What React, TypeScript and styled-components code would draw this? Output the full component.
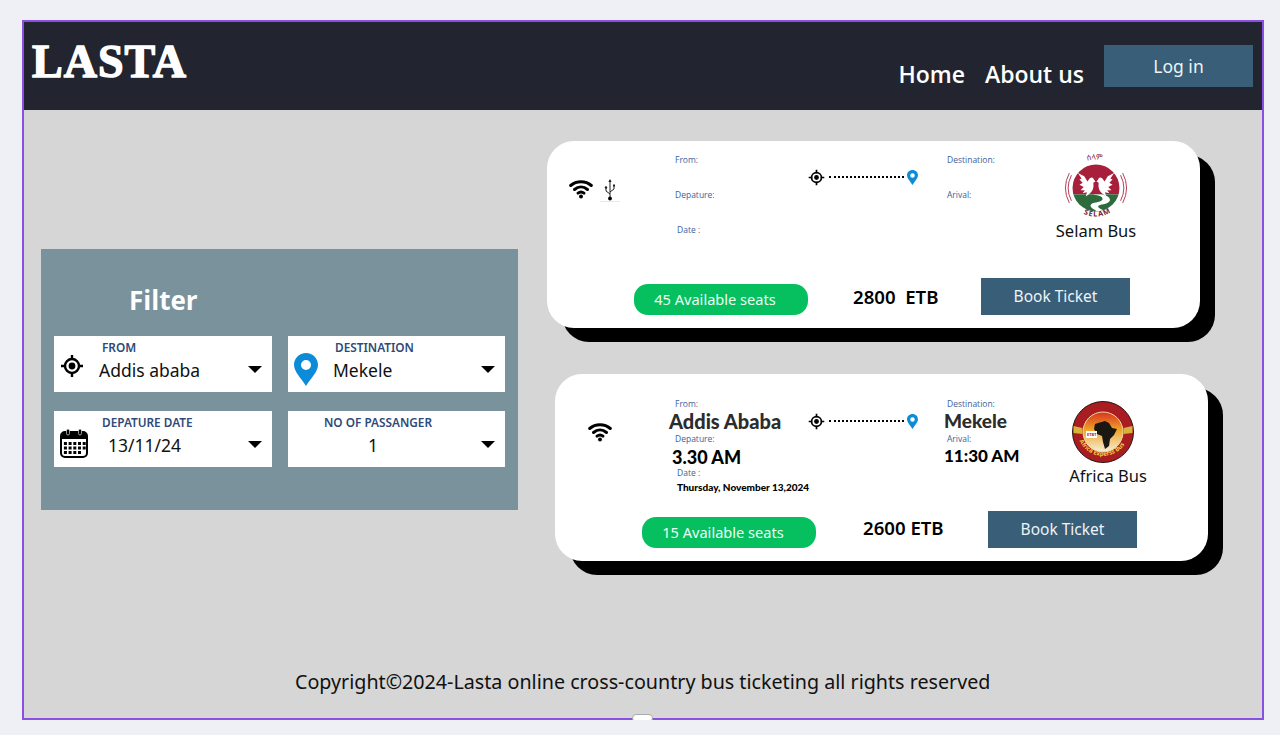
import React from "react";
import styled, { createGlobalStyle } from "styled-components";

const Global = createGlobalStyle`
  html, body { margin: 0; padding: 0; background: #eff0f5; overflow: hidden; }
  * { box-sizing: border-box; }
  body { font-family: "Noto Sans", "Open Sans", sans-serif; }
`;

const Frame = styled.div`
  position: relative;
  width: 1242px;
  height: 700px;
  margin: 20px 0 0 22px;
  border: 2px solid #8a4fe3;
  display: flex;
  flex-direction: column;
  background: #d6d6d6;
`;
const Handle = styled.div`
  position: absolute;
  left: 608px;
  bottom: -4px;
  width: 21px;
  height: 8px;
  border-radius: 4px;
  background: #fff;
  border: 1px solid #aaa;
`;
const Header = styled.header`
  height: 88px;
  background: #22252f;
  display: flex;
  align-items: flex-start;
  padding: 0 9px 0 8px;
  flex: none;
`;
const Logo = styled.div`
  font-family: "Liberation Serif", serif;
  font-weight: 700;
  font-size: 46px;
  line-height: 46px;
  letter-spacing: 1px;
  color: #fff;
  -webkit-text-stroke: 1.4px #fff;
  margin-top: 17px;
`;
const Nav = styled.nav`
  margin-left: auto;
  display: flex;
  align-items: flex-start;
  gap: 20px;
`;
const NavLink = styled.a`
  font-family: "Open Sans", sans-serif;
  font-weight: 600;
  font-size: 23px;
  line-height: 32px;
  color: #fff;
  margin-top: 36px;
`;
const LoginButton = styled.button`
  width: 149px;
  height: 42px;
  margin-top: 23px;
  border: none;
  background: #385e78;
  color: #eef3f6;
  font-family: "Noto Sans", sans-serif;
  font-size: 17.5px;
`;
const Content = styled.main`
  flex: 1;
  display: flex;
  align-items: flex-start;
  padding-left: 17px;
`;
const FilterPanel = styled.section`
  width: 477px;
  height: 261px;
  margin-top: 139px;
  background: #7a929c;
  padding: 33px 13px 0;
`;
const FilterTitle = styled.h2`
  margin: 0 0 18px 75px;
  font-family: "Open Sans", sans-serif;
  font-weight: 700;
  font-size: 26px;
  line-height: 36px;
  color: #fff;
`;
const FilterGrid = styled.div`
  display: grid;
  grid-template-columns: 218px 217px;
  grid-auto-rows: 56px;
  column-gap: 16px;
  row-gap: 19px;
`;
const Field = styled.div`
  background: #fff;
  display: grid;
  grid-template-columns: 44px 1fr 24px;
  align-items: center;
`;
const FieldIcon = styled.div<{ $top: number }>`
  display: flex;
  justify-content: flex-start;
  padding: ${(p) => p.$top}px 0 0 6px;
`;
const FieldText = styled.div`
  display: flex;
  flex-direction: column;
  padding-bottom: 7px;
`;
const FieldLabel = styled.span<{ $indent: number }>`
  margin-left: ${(p) => p.$indent}px;
  font-size: 11.8px;
  line-height: 14px;
  font-weight: 600;
  color: #2f4a78;
  white-space: nowrap;
`;
const FieldValue = styled.span<{ $indent: number }>`
  margin-left: ${(p) => p.$indent}px;
  margin-top: 5px;
  font-size: 17.5px;
  line-height: 22px;
  color: #111;
`;
const Caret = styled.span`
  width: 0;
  height: 0;
  margin: 11px 0 0 0;
  border-left: 7px solid transparent;
  border-right: 7px solid transparent;
  border-top: 7px solid #000;
`;
const Cards = styled.div`
  margin: 31px 0 0 29px;
  display: flex;
  flex-direction: column;
  gap: 46px;
`;
const Card = styled.article<{ $shift: number }>`
  width: 653px;
  height: 187px;
  margin-left: ${(p) => p.$shift}px;
  border-radius: 27px;
  background: #fff;
  box-shadow: 15px 14px 0 #000;
  display: flex;
  flex-direction: column;
`;
const TopRow = styled.div<{ $first: number }>`
  height: 137px;
  flex: none;
  display: grid;
  grid-template-columns: ${(p) => p.$first}px 133px 139px 1fr;
`;
const Amenities = styled.div<{ $left: number; $top: number }>`
  display: flex;
  gap: 7px;
  padding: ${(p) => p.$top}px 0 0 ${(p) => p.$left}px;
  align-items: flex-start;
`;
const InfoColumn = styled.div<{ $top: number }>`
  display: flex;
  flex-direction: column;
  padding-top: ${(p) => p.$top}px;
`;
const InfoLabel = styled.span<{ $gap: number; $indent?: number }>`
  font-family: "Open Sans", sans-serif;
  font-size: 8.5px;
  line-height: 10px;
  color: #3d5f9a;
  margin-bottom: ${(p) => p.$gap}px;
  margin-left: ${(p) => p.$indent ?? 0}px;
`;
const CityName = styled.strong<{ $indent?: number; $size: number }>`
  font-family: "Lato", sans-serif;
  font-weight: 900;
  font-size: ${(p) => p.$size}px;
  line-height: 22px;
  color: #2c2c2c;
  margin: -2px 0 2px ${(p) => p.$indent ?? 0}px;
  white-space: nowrap;
`;
const TimeText = styled.strong<{ $size: number; $indent: number }>`
  font-family: "Lato", sans-serif;
  font-weight: 900;
  font-size: ${(p) => p.$size}px;
  line-height: 22px;
  color: #000;
  margin-left: ${(p) => p.$indent}px;
  white-space: nowrap;
`;
const DateText = styled.strong`
  font-family: "Lato", sans-serif;
  font-weight: 900;
  font-size: 10px;
  line-height: 14px;
  color: #000;
  margin-left: 2px;
  white-space: nowrap;
`;
const Route = styled.div<{ $top: number }>`
  display: flex;
  align-items: center;
  height: 16px;
  margin-top: ${(p) => p.$top}px;
  gap: 3px;
`;
const RouteLine = styled.span`
  width: 75px;
  margin-left: 1px;
  border-top: 2px dotted #000;
`;
const DestSplit = styled.div`
  display: grid;
  grid-template-columns: 90px 1fr;
`;
const Brand = styled.div<{ $top: number; $left: number }>`
  display: flex;
  flex-direction: column;
  align-items: center;
  width: 110px;
  padding-top: ${(p) => p.$top}px;
  margin-left: ${(p) => p.$left}px;
  svg { overflow: visible; }
`;
const BrandName = styled.span<{ $nudge: number; $top: number }>`
  font-size: 16.5px;
  line-height: 20px;
  margin: ${(p) => p.$top}px 0 0 ${(p) => p.$nudge}px;
  color: #111;
  white-space: nowrap;
`;
const BottomRow = styled.div`
  display: flex;
  align-items: flex-start;
`;
const SeatsPill = styled.span<{ $left: number }>`
  margin: 6px 0 0 ${(p) => p.$left}px;
  width: 174px;
  height: 31px;
  border-radius: 14px;
  background: #06c05f;
  color: #eafff2;
  display: flex;
  align-items: center;
  justify-content: center;
  padding: 0 12px 2px 0;
  font-size: 14.6px;
`;
const Price = styled.strong<{ $left: number; $width: number; $top: number }>`
  margin: ${(p) => p.$top}px 0 0 ${(p) => p.$left}px;
  width: ${(p) => p.$width}px;
  font-family: "Noto Sans", sans-serif;
  font-weight: 600;
  font-size: 18.6px;
  line-height: 26px;
  color: #000;
  white-space: pre;
`;
const BookButton = styled.button`
  width: 149px;
  height: 37px;
  border: none;
  padding-bottom: 2px;
  background: #385e78;
  color: #eef3f6;
  font-family: "Noto Sans", sans-serif;
  font-size: 15.5px;
`;
const Footer = styled.footer`
  flex: none;
  height: 58px;
  padding: 8px 0 0 271px;
  font-size: 19.7px;
  line-height: 28px;
  color: #111;
  white-space: nowrap;
`;

const TargetIcon = ({ size = 24 }: { size?: number }) => (
  <svg width={size} height={size} viewBox="0 0 24 24" fill="none" stroke="#000">
    <circle cx="12" cy="12" r="7" strokeWidth="2.4" />
    <circle cx="12" cy="12" r="3.4" fill="#000" stroke="none" />
    <path d="M12 1v5M12 18v5M1 12h5M18 12h5" strokeWidth="2.4" />
  </svg>
);
const PinIcon = ({ w = 24, h = 33 }: { w?: number; h?: number }) => (
  <svg width={w} height={h} viewBox="0 0 24 33">
    <path
      fillRule="evenodd"
      fill="#0b8bd8"
      d="M12 0C5.2 0 0 5.2 0 11.8 0 19 7.6 25.6 12 33c4.4-7.4 12-14 12-21.2C24 5.2 18.8 0 12 0Zm0 7a5 5 0 1 1 0 10 5 5 0 0 1 0-10Z"
    />
  </svg>
);
const CalendarIcon = () => (
  <svg width="28" height="30" viewBox="0 0 28 30">
    <rect x="1" y="4" width="26" height="25" rx="4" fill="#fff" stroke="#000" strokeWidth="2" />
    <path d="M1 9a5 5 0 0 1 5-5h16a5 5 0 0 1 5 5v2H1Z" fill="#000" />
    <rect x="6.5" y="1" width="3" height="6" rx="1.5" fill="#000" stroke="#fff" strokeWidth=".6" />
    <rect x="18.5" y="1" width="3" height="6" rx="1.5" fill="#000" stroke="#fff" strokeWidth=".6" />
    {[14, 18.5, 23].map((y) =>
      [4.5, 9.2, 13.9, 18.6, 23.3].map((x) =>
        y === 23 && x > 20 ? null : <rect key={`${x}-${y}`} x={x - 0.6} y={y} width="3" height="3" fill="#000" />
      )
    )}
  </svg>
);
const WifiIcon = () => (
  <svg width="24" height="20" viewBox="0 0 24 20" fill="none" stroke="#000" strokeLinecap="round" strokeWidth="3">
    <path d="M1.7 6.5C7.5 1.4 16.5 1.4 22.3 6.5" />
    <path d="M5.5 10.5c4-3.4 9-3.4 13 0" />
    <path d="M9 14.1c1.8-1.4 4.2-1.4 6 0" />
    <circle cx="12" cy="17.6" r="2" fill="#000" stroke="none" />
  </svg>
);
const UsbIcon = () => (
  <svg width="20" height="24" viewBox="0 0 20 24" fill="none">
    <path d="M10 1v19M10 15l-4-3V9M10 13l4-3V7" stroke="#222" strokeWidth="1" />
    <path d="M10 0l1.6 3H8.4Z" fill="#222" />
    <circle cx="6" cy="8.5" r="1.2" fill="#222" />
    <rect x="13" y="5.5" width="2" height="2" fill="#222" />
    <circle cx="10" cy="19.5" r="1.9" fill="#000" />
    <path d="M0 22.5h20" stroke="#e3e3e3" strokeWidth=".8" />
  </svg>
);
const Dove = ({ flip }: { flip?: boolean }) => (
  <path
    transform={flip ? "translate(56 0) scale(-1 1)" : undefined}
    fill="#fff"
    d="M11 16l6 3 3 5 2-3q3-2 4 1l1.500 2-2 1q1 6-3 10l-4 3 1-4-4 1 2-3-4 0 3-3-4-2 3-2-3-3 2-1Z"
  />
);
const SelamLogo = () => (
  <svg width="60" height="64" viewBox="0 0 56 60">
    <defs>
      <clipPath id="selamDisc">
        <circle cx="28" cy="30" r="22" />
      </clipPath>
      <path id="selamTop" d="M14 7A28 28 0 0 1 42 7" />
      <path id="selamBottom" d="M11 50C19 59 37 59 45 50" />
    </defs>
    <g clipPath="url(#selamDisc)">
      <rect x="0" y="6" width="56" height="30" fill="#a81f3b" />
      <rect x="0" y="36" width="56" height="18" fill="#2e6b3c" />
      <path d="M25 36c6 1 10 2 9 5-2 3-10 2-11 5-1 2 3 4 6 6h8c-3-2-7-3-7-5 1-2 9-1 11-5 1-4-5-6-9-6Z" fill="#fff" />
    </g>
    <Dove />
    <Dove flip />
    <g fill="none" stroke="#a81f3b" strokeWidth=".8">
      <path d="M5 18a26 26 0 0 0 0 24M3 16a30 30 0 0 0 0 28" />
      <path d="M51 18a26 26 0 0 1 0 24M53 16a30 30 0 0 1 0 28" />
    </g>
    <text fontFamily="Noto Sans Ethiopic, Noto Sans, DejaVu Sans, sans-serif" fontSize="7" fill="#7a2238">
      <textPath href="#selamTop" startOffset="22%">ሰላም</textPath>
    </text>
    <text fontFamily="Noto Sans, sans-serif" fontSize="6.800" fontWeight="700" fill="#7a2238" letterSpacing="1">
      <textPath href="#selamBottom" startOffset="18%">SELAM</textPath>
    </text>
  </svg>
);
const AfricaLogo = () => (
  <svg width="62" height="62" viewBox="0 0 62 62">
    <defs>
      <path id="africaBottom" d="M6 36a26 26 0 0 0 50 0" />
      <linearGradient id="africaSky" x1="0" y1="0" x2="0" y2="1">
        <stop offset="0" stopColor="#d8321f" />
        <stop offset=".45" stopColor="#f0a428" />
        <stop offset="1" stopColor="#f5efd8" />
      </linearGradient>
    </defs>
    <circle cx="31" cy="31" r="30.5" fill="#a81c22" stroke="#2a1512" strokeWidth="1" />
    <circle cx="31" cy="31" r="20" fill="url(#africaSky)" stroke="#f0d9a0" strokeWidth="1" />
    <path d="M1.500 25l9 2v6l-9-1ZM60.500 25l-9 2v6l9-1Z" fill="#d9b23a" />
    <path
      fill="#1b1712"
      d="M26 22l7-2 4 2 3 5 5 1-3 6-4 4-1 7-4 3-2-7-1-6-5-2-3-5 1-5Z"
    />
    <rect x="14" y="30" width="11" height="7" fill="#fff" />
    <text x="15" y="35" fontFamily="Noto Sans, sans-serif" fontSize="4" fontWeight="700" fill="#a81c22">ETBT</text>
    <text fontFamily="Noto Sans, sans-serif" fontSize="6" fontWeight="700" fill="#f2d23c">
      <textPath href="#africaBottom" startOffset="6%">Africa Experss Bus</textPath>
    </text>
  </svg>
);

function BrandCol(props: {
  dest: React.ReactNode;
  logo: React.ReactNode;
  name: string;
  top: number;
  left: number;
  nudge: number;
  nameTop: number;
  colTop: number;
}) {
  return (
    <DestSplit>
      <InfoColumn $top={props.colTop}>{props.dest}</InfoColumn>
      <Brand $top={props.top} $left={props.left}>
        {props.logo}
        <BrandName $nudge={props.nudge} $top={props.nameTop}>{props.name}</BrandName>
      </Brand>
    </DestSplit>
  );
}

export default function App() {
  return (
    <>
      <Global />
      <Frame>
        <Header>
          <Logo>LASTA</Logo>
          <Nav>
            <NavLink>Home</NavLink>
            <NavLink>About us</NavLink>
            <LoginButton>Log in</LoginButton>
          </Nav>
        </Header>
        <Content>
          <FilterPanel>
            <FilterTitle>Filter</FilterTitle>
            <FilterGrid>
              <Field>
                <FieldIcon $top={3}><TargetIcon /></FieldIcon>
                <FieldText>
                  <FieldLabel $indent={4}>FROM</FieldLabel>
                  <FieldValue $indent={1}>Addis ababa</FieldValue>
                </FieldText>
                <Caret />
              </Field>
              <Field>
                <FieldIcon $top={11}><PinIcon /></FieldIcon>
                <FieldText>
                  <FieldLabel $indent={3}>DESTINATION</FieldLabel>
                  <FieldValue $indent={1}>Mekele</FieldValue>
                </FieldText>
                <Caret />
              </Field>
              <Field>
                <FieldIcon $top={7}><CalendarIcon /></FieldIcon>
                <FieldText>
                  <FieldLabel $indent={4}>DEPATURE DATE</FieldLabel>
                  <FieldValue $indent={10}>13/11/24</FieldValue>
                </FieldText>
                <Caret />
              </Field>
              <Field>
                <FieldIcon $top={3} />
                <FieldText>
                  <FieldLabel $indent={-8}>NO OF PASSANGER</FieldLabel>
                  <FieldValue $indent={36}>1</FieldValue>
                </FieldText>
                <Caret />
              </Field>
            </FilterGrid>
          </FilterPanel>
          <Cards>
            <Card $shift={0}>
              <TopRow $first={128}>
                <Amenities $left={22} $top={38}>
                  <WifiIcon />
                  <UsbIcon />
                </Amenities>
                <InfoColumn $top={14}>
                  <InfoLabel $gap={25}>From:</InfoLabel>
                  <InfoLabel $gap={25}>Depature:</InfoLabel>
                  <InfoLabel $gap={0} $indent={2}>Date :</InfoLabel>
                </InfoColumn>
                <Route $top={28}>
                  <TargetIcon size={17} />
                  <RouteLine />
                  <PinIcon w={11} h={15} />
                </Route>
                <BrandCol
                  dest={<><InfoLabel $gap={25}>Destination:</InfoLabel><InfoLabel $gap={0}>Arival:</InfoLabel></>}
                  logo={<SelamLogo />}
                  name="Selam Bus"
                  top={15}
                  left={4}
                  nudge={0}
                  nameTop={1}
                  colTop={14}
                />
              </TopRow>
              <BottomRow>
                <SeatsPill $left={87}>45 Available seats</SeatsPill>
                <Price $left={45} $width={128} $top={6}>2800  ETB</Price>
                <BookButton>Book Ticket</BookButton>
              </BottomRow>
            </Card>
            <Card $shift={8}>
              <TopRow $first={120}>
                <Amenities $left={33} $top={48}>
                  <WifiIcon />
                </Amenities>
                <InfoColumn $top={25}>
                  <InfoLabel $gap={3}>From:</InfoLabel>
                  <CityName $indent={-6} $size={20}>Addis Ababa</CityName>
                  <InfoLabel $gap={2}>Depature:</InfoLabel>
                  <TimeText $size={18} $indent={-3}>3.30 AM</TimeText>
                  <InfoLabel $gap={2} $indent={2}>Date :</InfoLabel>
                  <DateText>Thursday, November 13,2024</DateText>
                </InfoColumn>
                <Route $top={39}>
                  <TargetIcon size={17} />
                  <RouteLine />
                  <PinIcon w={11} h={15} />
                </Route>
                <BrandCol
                  dest={
                    <>
                      <InfoLabel $gap={3}>Destination:</InfoLabel>
                      <CityName $indent={-3} $size={19}>Mekele</CityName>
                      <InfoLabel $gap={1}>Arival:</InfoLabel>
                      <TimeText $size={17} $indent={-3}>11:30 AM</TimeText>
                    </>
                  }
                  logo={<AfricaLogo />}
                  name="Africa Bus"
                  top={27}
                  left={11}
                  nudge={10}
                  nameTop={3}
                  colTop={25}
                />
              </TopRow>
              <BottomRow>
                <SeatsPill $left={87}>15 Available seats</SeatsPill>
                <Price $left={47} $width={125} $top={4}>2600 ETB</Price>
                <BookButton>Book Ticket</BookButton>
              </BottomRow>
            </Card>
          </Cards>
        </Content>
        <Footer>Copyright©2024-Lasta online cross-country bus ticketing all rights reserved</Footer>
        <Handle />
      </Frame>
    </>
  );
}
